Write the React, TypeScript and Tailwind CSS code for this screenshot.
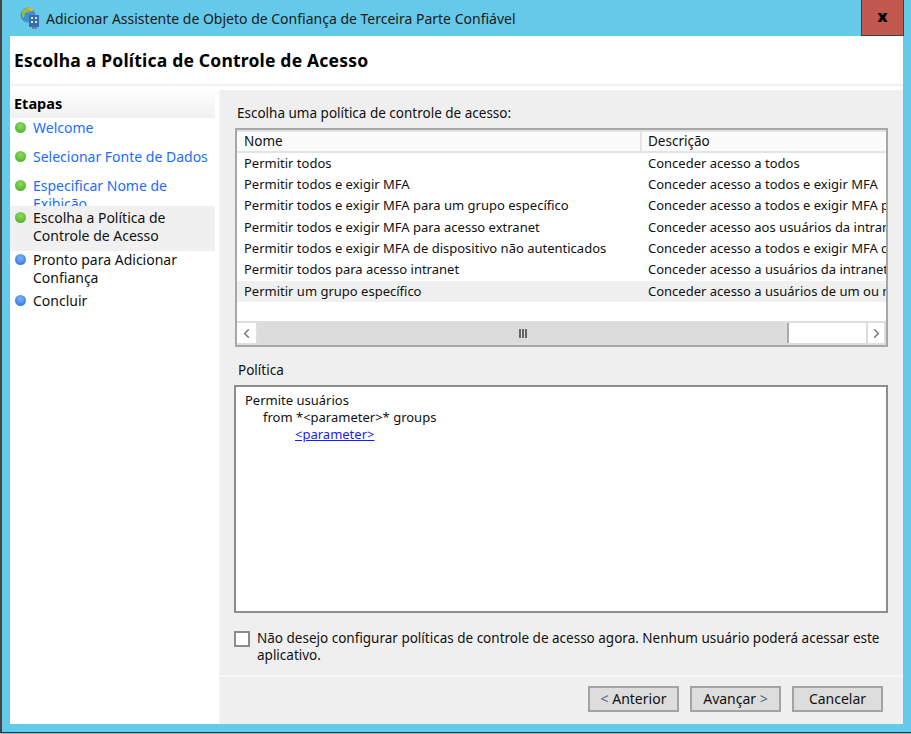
import { ChevronLeft, ChevronRight } from 'lucide-react';

const font = 'font-["Noto_Sans","Open_Sans",sans-serif]';

const steps = [
  { label: 'Welcome', done: true, link: true, h: 'h-[29px]' },
  { label: 'Selecionar Fonte de Dados', done: true, link: true, h: 'h-[29px]' },
  { label: 'Especificar Nome de Exibição', done: true, link: true, h: 'h-[29px]' },
  { label: 'Escolha a Política de Controle de Acesso', done: true, active: true, h: 'h-[45px]' },
  { label: 'Pronto para Adicionar Confiança', done: false, h: 'h-[41px]' },
  { label: 'Concluir', done: false, h: 'h-[24px]' },
];

const policies = [
  ['Permitir todos', 'Conceder acesso a todos'],
  ['Permitir todos e exigir MFA', 'Conceder acesso a todos e exigir MFA'],
  ['Permitir todos e exigir MFA para um grupo específico', 'Conceder acesso a todos e exigir MFA para um grupo específico'],
  ['Permitir todos e exigir MFA para acesso extranet', 'Conceder acesso aos usuários da intranet e exigir MFA'],
  ['Permitir todos e exigir MFA de dispositivo não autenticados', 'Conceder acesso a todos e exigir MFA de dispositivo'],
  ['Permitir todos para acesso intranet', 'Conceder acesso a usuários da intranet.'],
  ['Permitir um grupo específico', 'Conceder acesso a usuários de um ou mais grupos'],
];

function AppIcon() {
  return (
    <svg width="22" height="24" viewBox="0 0 22 24">
      <circle cx="9" cy="9" r="7.5" fill="#3d8fd0" />
      <path d="M3 5c2-3 6-4 8-3l-1 4-4 1-1 5-2-1z" fill="#8fbf4a" />
      <path d="M9 1.5c3 0 5 1 6 3l-4 1z" fill="#e8b33c" />
      <path d="M10 9h10v12h-10z" fill="#3a6ea8" />
      <path d="M12 11h2v2h-2zM16 11h2v2h-2zM12 15h2v2h-2zM16 15h2v2h-2z" fill="#cfe4f5" />
      <path d="M13 21h5v2h-5z" fill="#5b87b5" />
    </svg>
  );
}

function Dot({ done }: { done: boolean }) {
  return (
    <span
      className={`block size-[11px] shrink-0 rounded-full ${
        done
          ? 'bg-[radial-gradient(circle_at_50%_35%,#8fdc5c,#3fa82a)]'
          : 'bg-[radial-gradient(circle_at_50%_35%,#7fb4fa,#2268e8)]'
      }`}
    />
  );
}

function WizardButton({ children, width }: { children: React.ReactNode; width: string }) {
  return (
    <button
      type="button"
      className={`${width} h-[26px] border-2 border-[#a3a3a3] bg-[#dddddd] text-[14px] leading-none text-[#111]`}
    >
      {children}
    </button>
  );
}

export default function App() {
  return (
    <div className={`${font} h-[734px] w-[911px] overflow-hidden bg-[#65c9ea] text-[14px] text-[#111]`}>
      <div className="flex h-[733px] flex-col border-b border-[#333] border-l-2 border-l-[#444] pl-2 pr-2">
        {/* title bar */}
        <div className="flex h-9 shrink-0 items-start justify-between">
          <div className="flex h-[36px] items-center gap-[5px] pl-[9px]">
            <AppIcon />
            <span className="text-[14px] text-[#1a1a1a]">Adicionar Assistente de Objeto de Confiança de Terceira Parte Confiável</span>
          </div>
          <div className="-mr-px flex h-[36px] w-[43px] items-center justify-center border-x border-b border-[#4a3a3a] bg-[#c1594e] pb-1 text-[16px] leading-none font-black text-black">
            x
          </div>
        </div>

        <div className="flex min-h-0 flex-1 flex-col bg-white">
          <div className="flex h-[50px] shrink-0 items-center border-b-2 border-[#f1f1f1] pl-1 text-[17.5px] font-bold tracking-[0.2px] text-black">
            Escolha a Política de Controle de Acesso
          </div>

          <div className="flex min-h-0 flex-1 pt-[4px]">
            {/* steps */}
            <div className="flex w-[205px] shrink-0 flex-col">
              <div className="flex h-[28px] items-center bg-gradient-to-b from-white to-[#f0f0f0] pl-1 text-[14.5px] font-bold text-black">
                Etapas
              </div>
              <div className="flex flex-col pt-[1px]">
                {steps.map((step) => (
                  <div key={step.label} className={`${step.h} flex gap-[5px] pl-[5px] ${step.active ? 'bg-[#f0f0f0]' : ''}`}>
                    <div className={step.active ? 'pt-[6px]' : 'pt-[3px]'}>
                      <Dot done={step.done} />
                    </div>
                    <span
                      className={`w-[182px] pl-[2px] leading-[18px] ${step.active ? 'pt-[3px]' : ''} ${
                        step.link ? 'text-[#1a6dff]' : 'text-[#111]'
                      }`}
                    >
                      {step.label}
                    </span>
                  </div>
                ))}
              </div>
            </div>

            {/* main panel */}
            <div className="ml-[4px] flex min-w-0 flex-1 flex-col border-l border-[#f6f6f6] bg-[#efefef]">
              <div className="flex flex-1 flex-col pr-[15px] pl-[15px]">
                <div className="flex h-[38px] items-center pl-[2px] pt-[8px] text-[13.5px]">Escolha uma política de controle de acesso:</div>
                <div className="flex h-[219px] flex-col border-2 border-[#a4a8aa] bg-white">
                  <div className="flex h-[23px] shrink-0 border-y-2 border-y-[#e4e4e4] bg-[#fbfbfb] text-[13.5px] leading-[19px]">
                    <div className="w-[405px] border-r-2 border-[#e4e4e4] pl-[7px]">Nome</div>
                    <div className="pl-[6px]">Descrição</div>
                  </div>
                  <div className="min-h-0 flex-1 overflow-hidden">
                    {policies.map(([name, desc], i) => (
                      <div
                        key={name}
                        className={`flex h-[21.3px] items-center whitespace-nowrap text-[13px] ${i === 6 ? 'bg-[#f0f0f0]' : ''}`}
                      >
                        <div className="w-[405px] shrink-0 overflow-hidden pl-[7px]">{name}</div>
                        <div className="overflow-hidden pl-[6px]">{desc}</div>
                      </div>
                    ))}
                  </div>
                  <div className="flex h-[24px] shrink-0 border-y-2 border-[#dedede] bg-white">
                    <div className="flex w-[21px] items-center justify-center border-r-2 border-[#dedede]">
                      <ChevronLeft size={15} strokeWidth={2.5} className="text-[#777]" />
                    </div>
                    <div className="flex w-[531px] items-center justify-center border-r-2 border-[#a9a9a9] bg-[#dcdcdc]">
                      <span className="flex gap-[1px]">
                        <i className="block h-[9px] w-[2px] bg-[#666]" />
                        <i className="block h-[9px] w-[2px] bg-[#666]" />
                        <i className="block h-[9px] w-[2px] bg-[#666]" />
                      </span>
                    </div>
                    <div className="flex-1" />
                    <div className="flex w-[20px] items-center justify-center border-x-2 border-[#dedede]">
                      <ChevronRight size={15} strokeWidth={2.5} className="text-[#777]" />
                    </div>
                  </div>
                </div>

                <div className="flex h-[38px] items-center pl-[3px] pt-[8px] text-[13.5px]">Política</div>
                <div className="-ml-px h-[228px] border-2 border-[#8c8c8c] bg-white pt-[5px] pl-[9px] text-[13px] leading-[17px]">
                  <div>Permite usuários</div>
                  <div className="pl-[18px]">from *&lt;parameter&gt;* groups</div>
                  <div className="pl-[50px]">
                    <span className="text-[#1a1aff] underline">&lt;parameter&gt;</span>
                  </div>
                </div>

                <div className="-ml-px mt-[17px] flex gap-[7px] text-[13.5px] leading-[17px]">
                  <span className="mt-[1px] block size-[16px] shrink-0 border-2 border-[#8c8c8c] bg-white" />
                  <p>Não desejo configurar políticas de controle de acesso agora. Nenhum usuário poderá acessar este aplicativo.</p>
                </div>
              </div>

              <div className="flex h-[49px] shrink-0 items-start justify-end gap-[11px] border-t-2 border-[#f8f8f8] pt-[9px] pr-[20px]">
                <WizardButton width="w-[91px]">
                  <span className="text-[#4a6a8a]">&lt;</span> Anterior
                </WizardButton>
                <WizardButton width="w-[91px]">
                  Avançar <span className="text-[#4a6a8a]">&gt;</span>
                </WizardButton>
                <WizardButton width="w-[91px]">Cancelar</WizardButton>
              </div>
            </div>
          </div>
        </div>
        <div className="h-2 shrink-0" />
      </div>
    </div>
  );
}
